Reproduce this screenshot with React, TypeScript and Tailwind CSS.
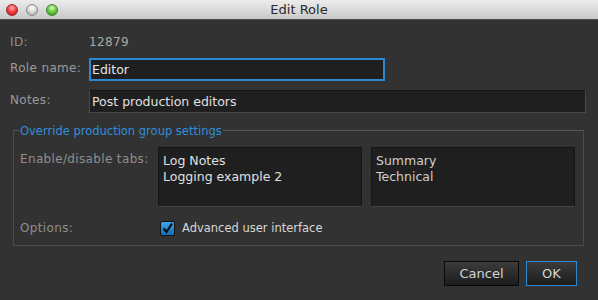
import React from "react";

const font = { fontFamily: '"DejaVu Sans", "Noto Sans", sans-serif' };

function TrafficLight({ color }: { color: "red" | "gray" | "green" }) {
  const bg =
    color === "red"
      ? "bg-[radial-gradient(circle_at_50%_30%,#ffb0b0_0%,#ec3b40_50%,#b3151b_100%)] border-[#a0282c]"
      : color === "green"
      ? "bg-[radial-gradient(circle_at_50%_30%,#d8f8c0_0%,#62c83e_50%,#2f8a1e_100%)] border-[#3c8a2a]"
      : "bg-[radial-gradient(circle_at_50%_30%,#ffffff_0%,#d6d6d6_50%,#9a9a9a_100%)] border-[#8a8a8a]";
  return <div className={`h-[12px] w-[12px] rounded-full border ${bg}`} />;
}

function Checkbox() {
  return (
    <div className="flex h-[15px] w-[15px] items-center justify-center rounded-[2px] border border-[#111] bg-[linear-gradient(#3aa6e8,#0f6fb4)]">
      <svg width="13" height="13" viewBox="0 0 13 13">
        <path d="M2.5 6.5 L5.5 10 L11 1.5" fill="none" stroke="#0b0b0b" strokeWidth="2.2" strokeLinejoin="miter" />
      </svg>
    </div>
  );
}

export default function App() {
  return (
    <div className="h-[300px] w-[598px] overflow-hidden bg-[#323232] text-[12px]" style={font}>
      {/* title bar */}
      <div className="relative flex h-[20px] items-center border-b border-[#4a4a4a] bg-[linear-gradient(#ececec,#c9c9c9)]">
        <div className="flex items-center gap-[8px] pl-[6px]">
          <TrafficLight color="red" />
          <TrafficLight color="gray" />
          <TrafficLight color="green" />
        </div>
        <div className="absolute inset-x-0 top-0 flex h-[19px] items-center justify-center text-[13px] text-[#2a2a2a]">
          Edit Role
        </div>
      </div>

      <div className="flex flex-col pl-[10px]">
        {/* ID */}
        <div className="mt-[14px] flex h-[16px] items-center tracking-[0.35px]">
          <span className="w-[79px] text-[#8e8e8e]">ID:</span>
          <span className="text-[#a8a8a8]">12879</span>
        </div>

        {/* Role name */}
        <div className="mt-[8px] flex h-[23px] items-center">
          <span className="-mt-[4px] w-[79px] tracking-[0.35px] text-[#9a9a9a]">Role name:</span>
          <div className="flex h-[23px] w-[296px] items-center border-2 border-[#2a88d4] bg-[#1f1f1f] px-[1px] pt-[1px] text-[12.5px] text-[#e6e6e6]">
            Editor
          </div>
        </div>

        {/* Notes */}
        <div className="mt-[9px] flex h-[23px] items-center">
          <span className="-mt-[4px] w-[79px] tracking-[0.35px] text-[#9a9a9a]">Notes:</span>
          <div className="flex h-[23px] w-[497px] items-center border border-[#484848] border-t-[#151515] bg-[#1f1f1f] px-[2px] pt-[1px] text-[12.5px] text-[#e0e0e0]">
            Post production editors
          </div>
        </div>

        {/* group */}
        <fieldset className="ml-[3px] mt-[9px] w-[571px] border border-[#4c4c4c] border-t-[#555] pb-[9px]">
          <legend className="ml-[5px] h-[16px] px-[1px] pt-[1px] leading-[16px] text-[11.5px] text-[#2f8fdc]">
            Override production group settings
          </legend>
          <div className="mt-[9px] flex">
            <span className="mt-[3px] w-[144px] pl-[6px] tracking-[0.35px] text-[#8e8e8e]">Enable/disable tabs:</span>
            <div className="flex gap-[9px]">
              <div className="h-[60px] w-[204px] border border-[#151515] border-b-[#444] bg-[#1f1f1f] px-[4px] pt-[5px] text-[12.5px] leading-[16px] text-[#e0e0e0]">
                <div>Log Notes</div>
                <div>Logging example 2</div>
              </div>
              <div className="h-[60px] w-[204px] border border-[#151515] border-b-[#444] bg-[#1f1f1f] px-[4px] pt-[5px] text-[12.5px] leading-[16px] text-[#d0d0d0]">
                <div>Summary</div>
                <div>Technical</div>
              </div>
            </div>
          </div>
          <div className="mt-[13px] flex h-[16px] items-center">
            <span className="w-[146px] pl-[6px] tracking-[0.35px] text-[#8e8e8e]">Options:</span>
            <Checkbox />
            <span className="ml-[7px] mt-[2px] text-[11.5px] text-[#d8d8d8]">Advanced user interface</span>
          </div>
        </fieldset>

        {/* buttons */}
        <div className="mr-[21px] mt-[15px] flex justify-end gap-[7px]">
          <button className="flex h-[25px] w-[75px] items-center justify-center border border-[#080808] bg-[linear-gradient(#3c3c3c,#1c1c1c)] text-[13px] text-[#d4d4d4]">
            Cancel
          </button>
          <button className="flex h-[25px] w-[51px] items-center justify-center border border-[#2a8ad8] bg-[linear-gradient(#3c3c3c,#1c1c1c)] text-[13px] text-[#d4d4d4]">
            OK
          </button>
        </div>
      </div>
    </div>
  );
}
